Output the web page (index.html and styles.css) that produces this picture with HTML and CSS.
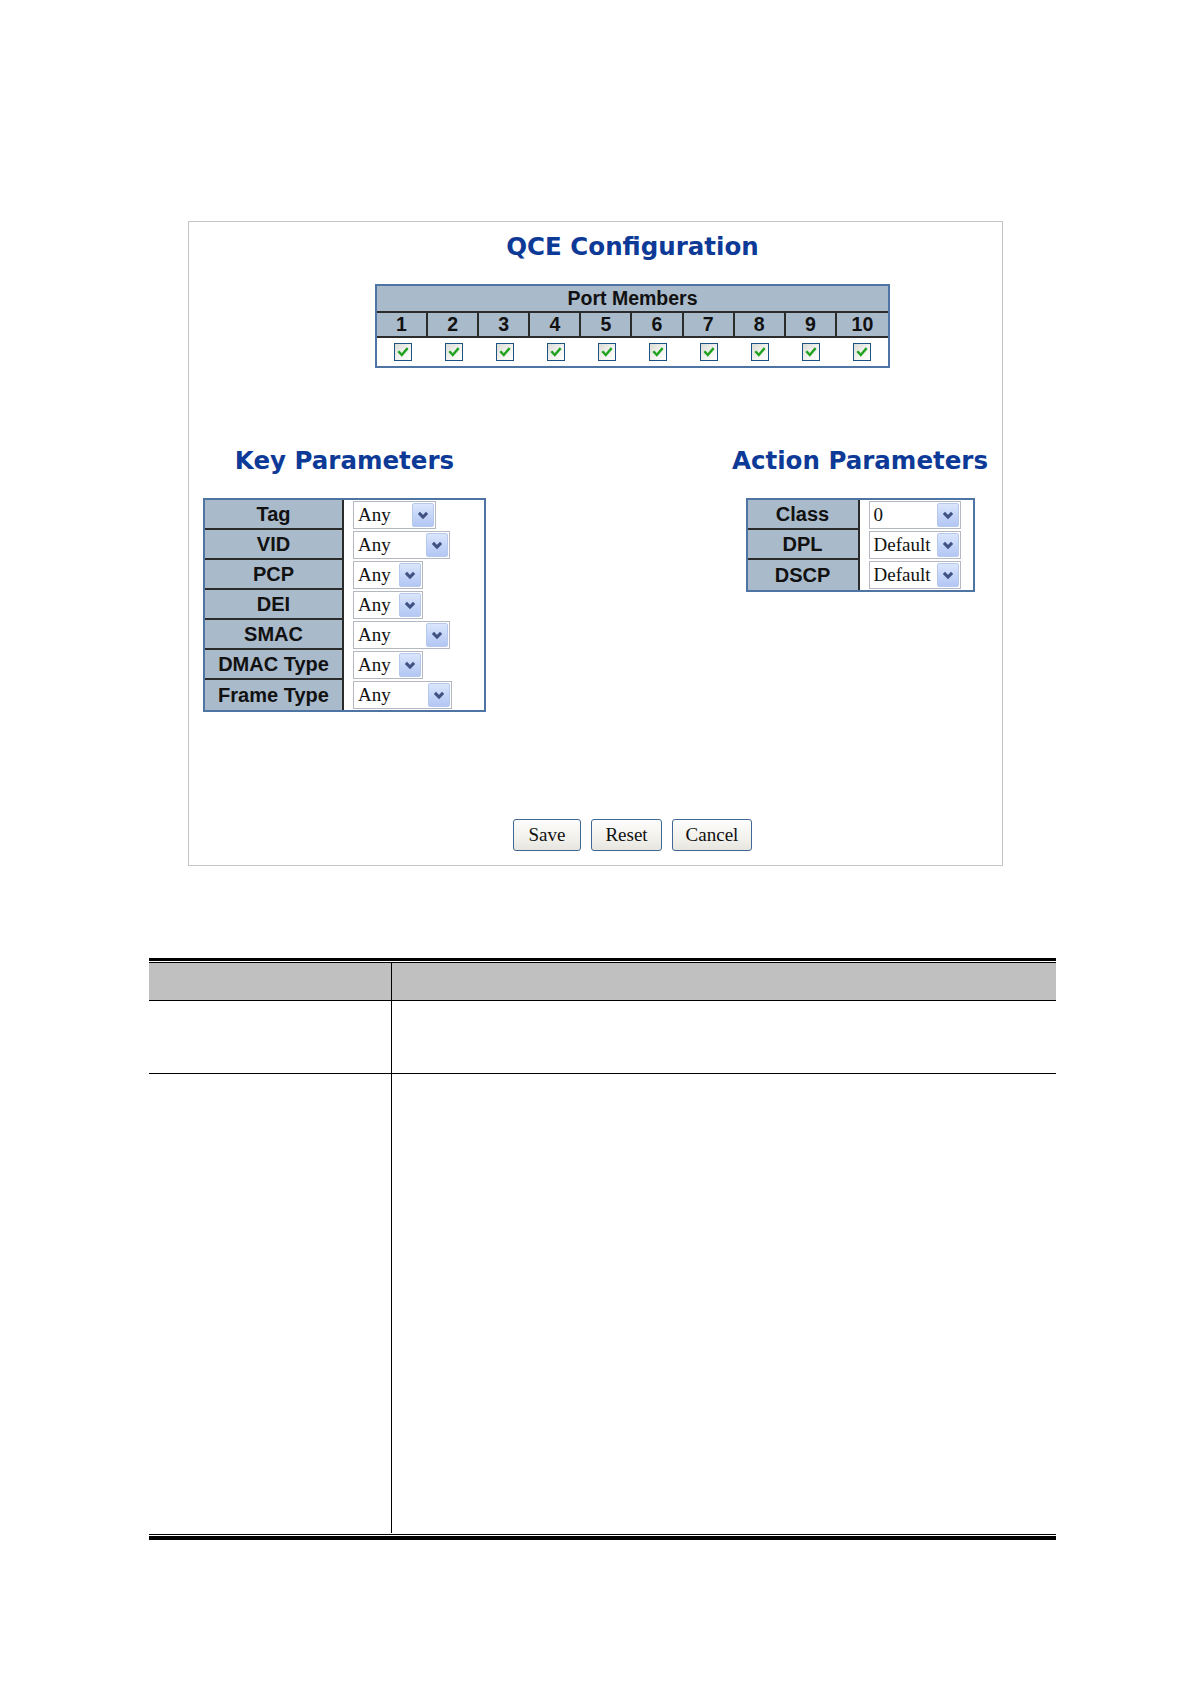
FILE: index.html
```html
<!DOCTYPE html>
<html>
<head>
<meta charset="utf-8">
<title>QCE Configuration</title>
<link rel="stylesheet" href="styles.css">
</head>
<body>
<div class="page">
  <div class="panel">
    <div class="center-block">
      <h1 class="title">QCE Configuration</h1>
      <div class="ports">
        <div class="ports-head">Port Members</div>
        <div class="ports-nums">
          <div>1</div><div>2</div><div>3</div><div>4</div><div>5</div><div>6</div><div>7</div><div>8</div><div>9</div><div>10</div>
        </div>
        <div class="ports-checks">
          <div><span class="cb"><svg viewBox="0 0 16 16"><path d="M3.6 8.2 L6.6 11.4 L12.4 4.6"/></svg></span></div>
          <div><span class="cb"><svg viewBox="0 0 16 16"><path d="M3.6 8.2 L6.6 11.4 L12.4 4.6"/></svg></span></div>
          <div><span class="cb"><svg viewBox="0 0 16 16"><path d="M3.6 8.2 L6.6 11.4 L12.4 4.6"/></svg></span></div>
          <div><span class="cb"><svg viewBox="0 0 16 16"><path d="M3.6 8.2 L6.6 11.4 L12.4 4.6"/></svg></span></div>
          <div><span class="cb"><svg viewBox="0 0 16 16"><path d="M3.6 8.2 L6.6 11.4 L12.4 4.6"/></svg></span></div>
          <div><span class="cb"><svg viewBox="0 0 16 16"><path d="M3.6 8.2 L6.6 11.4 L12.4 4.6"/></svg></span></div>
          <div><span class="cb"><svg viewBox="0 0 16 16"><path d="M3.6 8.2 L6.6 11.4 L12.4 4.6"/></svg></span></div>
          <div><span class="cb"><svg viewBox="0 0 16 16"><path d="M3.6 8.2 L6.6 11.4 L12.4 4.6"/></svg></span></div>
          <div><span class="cb"><svg viewBox="0 0 16 16"><path d="M3.6 8.2 L6.6 11.4 L12.4 4.6"/></svg></span></div>
          <div><span class="cb"><svg viewBox="0 0 16 16"><path d="M3.6 8.2 L6.6 11.4 L12.4 4.6"/></svg></span></div>
        </div>
      </div>
    </div>

    <div class="params">
      <div class="param-col">
        <h2 class="title">Key Parameters</h2>
        <div class="ptable key">
          <div class="lbl">Tag</div>
          <div class="val"><div class="sel w83"><span>Any</span><i class="dd"><svg viewBox="0 0 12 12"><polyline points="2.5,4.2 6,7.7 9.5,4.2"/></svg></i></div></div>
          <div class="lbl">VID</div>
          <div class="val"><div class="sel w97"><span>Any</span><i class="dd"><svg viewBox="0 0 12 12"><polyline points="2.5,4.2 6,7.7 9.5,4.2"/></svg></i></div></div>
          <div class="lbl">PCP</div>
          <div class="val"><div class="sel w70"><span>Any</span><i class="dd"><svg viewBox="0 0 12 12"><polyline points="2.5,4.2 6,7.7 9.5,4.2"/></svg></i></div></div>
          <div class="lbl">DEI</div>
          <div class="val"><div class="sel w70"><span>Any</span><i class="dd"><svg viewBox="0 0 12 12"><polyline points="2.5,4.2 6,7.7 9.5,4.2"/></svg></i></div></div>
          <div class="lbl">SMAC</div>
          <div class="val"><div class="sel w97"><span>Any</span><i class="dd"><svg viewBox="0 0 12 12"><polyline points="2.5,4.2 6,7.7 9.5,4.2"/></svg></i></div></div>
          <div class="lbl">DMAC Type</div>
          <div class="val"><div class="sel w70"><span>Any</span><i class="dd"><svg viewBox="0 0 12 12"><polyline points="2.5,4.2 6,7.7 9.5,4.2"/></svg></i></div></div>
          <div class="lbl last">Frame Type</div>
          <div class="val"><div class="sel w99"><span>Any</span><i class="dd"><svg viewBox="0 0 12 12"><polyline points="2.5,4.2 6,7.7 9.5,4.2"/></svg></i></div></div>
        </div>
      </div>
      <div class="param-col">
        <h2 class="title">Action Parameters</h2>
        <div class="ptable action">
          <div class="lbl">Class</div>
          <div class="val"><div class="sel w92"><span>0</span><i class="dd"><svg viewBox="0 0 12 12"><polyline points="2.5,4.2 6,7.7 9.5,4.2"/></svg></i></div></div>
          <div class="lbl">DPL</div>
          <div class="val"><div class="sel w92"><span>Default</span><i class="dd"><svg viewBox="0 0 12 12"><polyline points="2.5,4.2 6,7.7 9.5,4.2"/></svg></i></div></div>
          <div class="lbl last">DSCP</div>
          <div class="val"><div class="sel w92"><span>Default</span><i class="dd"><svg viewBox="0 0 12 12"><polyline points="2.5,4.2 6,7.7 9.5,4.2"/></svg></i></div></div>
        </div>
      </div>
    </div>

    <div class="btns">
      <button class="btn b-save">Save</button>
      <button class="btn b-reset">Reset</button>
      <button class="btn b-cancel">Cancel</button>
    </div>
  </div>

  <div class="doc">
    <div class="rule-thick"></div>
    <div class="rule-thin"></div>
    <div class="doc-row doc-head"><div class="c1"></div><div class="c2"></div></div>
    <div class="doc-row doc-r1"><div class="c1"></div><div class="c2"></div></div>
    <div class="doc-row doc-r2"><div class="c1"></div><div class="c2"></div></div>
    <div class="rule-thin"></div>
    <div class="rule-gap"></div>
    <div class="rule-thick bottom"></div>
  </div>
</div>
</body>
</html>
```

FILE: styles.css
```css
html, body {
  margin: 0;
  padding: 0;
  background: #ffffff;
}

.page {
  padding-top: 221px;
  padding-bottom: 100px;
}

.panel {
  margin-left: 188px;
  width: 815px;
  box-sizing: border-box;
  border: 1px solid #c4c4c4;
  padding: 10px 14px 14px 14px;
  background: #ffffff;
}

.center-block {
  padding-left: 74px;
  display: flex;
  flex-direction: column;
  align-items: center;
}

.title {
  margin: 0;
  font-family: "DejaVu Sans", "Liberation Sans", sans-serif;
  font-weight: bold;
  font-size: 24.5px;
  line-height: 30px;
  color: #0d3a97;
  white-space: nowrap;
}

/* Port members */
.ports {
  margin-top: 22px;
  width: 515px;
  box-sizing: border-box;
  border: 2px solid #4e74a3;
  font-family: "Liberation Sans", Arial, sans-serif;
  font-weight: bold;
  color: #111111;
}

.ports-head {
  height: 25px;
  line-height: 25px;
  text-align: center;
  font-size: 19.5px;
  background: #a9bacb;
  border-bottom: 2px solid #2b2b2b;
}

.ports-nums,
.ports-checks {
  display: grid;
  grid-template-columns: repeat(10, 1fr);
}

.ports-nums {
  height: 23px;
  border-bottom: 2px solid #2b2b2b;
  background: #a9bacb;
}

.ports-nums div {
  text-align: center;
  font-size: 19.5px;
  line-height: 23px;
  border-right: 2px solid #2b2b2b;
}

.ports-nums div:last-child {
  border-right: none;
}

.ports-checks {
  height: 28px;
  background: #ffffff;
}

.ports-checks div {
  display: flex;
  align-items: center;
  justify-content: center;
}

.cb {
  width: 18px;
  height: 18px;
  box-sizing: border-box;
  border: 1px solid #1d5281;
  background: linear-gradient(135deg, #dcdcd6 0%, #f4f4f1 60%, #ffffff 100%);
  display: flex;
  align-items: center;
  justify-content: center;
}

.cb svg {
  width: 14px;
  height: 14px;
}

.cb path {
  fill: none;
  stroke: #21a321;
  stroke-width: 2.8;
  stroke-linecap: square;
}

/* Parameters */
.params {
  margin-top: 78px;
  display: flex;
  justify-content: space-between;
  align-items: flex-start;
}

.param-col {
  display: flex;
  flex-direction: column;
  align-items: center;
}

.ptable {
  margin-top: 22px;
  display: grid;
  grid-auto-rows: 30px;
  border: 2px solid #4e74a3;
  background: #ffffff;
}

.ptable.key {
  grid-template-columns: 139px 140px;
}

.ptable.action {
  grid-template-columns: 112px 113px;
}

.lbl {
  box-sizing: border-box;
  background: #a9bacb;
  border-right: 2px solid #2b2b2b;
  border-bottom: 2px solid #2b2b2b;
  font-family: "Liberation Sans", Arial, sans-serif;
  font-weight: bold;
  font-size: 20px;
  color: #111111;
  display: flex;
  align-items: center;
  justify-content: center;
  white-space: nowrap;
}

.lbl.last {
  border-bottom: none;
}

.val {
  display: flex;
  align-items: center;
  padding-left: 9px;
}

.sel {
  height: 28px;
  box-sizing: border-box;
  border: 1px solid #b4b8c0;
  background: #ffffff;
  display: flex;
  align-items: center;
  justify-content: space-between;
  padding: 1px 1px 1px 4px;
}

.sel span {
  font-family: "Liberation Serif", "Times New Roman", serif;
  font-size: 19px;
  color: #111111;
  line-height: 22px;
}

.w70 { width: 70px; }
.w83 { width: 83px; }
.w92 { width: 92px; }
.w97 { width: 97px; }
.w99 { width: 99px; }

.dd {
  width: 22px;
  height: 24px;
  box-sizing: border-box;
  border: 1px solid #b7c8ee;
  border-radius: 2px;
  background: linear-gradient(180deg, #dbe6fd 0%, #c3d4f8 55%, #b3c7f3 100%);
  display: flex;
  align-items: center;
  justify-content: center;
}

.dd svg {
  width: 14px;
  height: 14px;
}

.dd polyline {
  fill: none;
  stroke: #3f5282;
  stroke-width: 2.6;
}

/* Buttons */
.btns {
  margin-top: 107px;
  padding-left: 74px;
  display: flex;
  justify-content: center;
  gap: 10px;
}

.btn {
  height: 32px;
  box-sizing: border-box;
  border: 1px solid #3f6894;
  border-radius: 3px;
  background: linear-gradient(180deg, #fdfdfc 0%, #f2f1ec 60%, #e6e5df 100%);
  font-family: "Liberation Serif", "Times New Roman", serif;
  font-size: 19px;
  color: #111111;
  padding: 0;
  margin: 0;
}

.b-save { width: 68px; }
.b-reset { width: 71px; }
.b-cancel { width: 80px; }

/* Document table */
.doc {
  margin-top: 92px;
  margin-left: 149px;
  width: 907px;
}

.rule-thick {
  height: 3px;
  background: #000000;
}

.rule-thick.bottom {
  height: 4px;
}

.rule-thin {
  height: 1px;
  background: #000000;
  margin-top: 1px;
}

.rule-gap {
  height: 1px;
}

.doc-row {
  display: grid;
  grid-template-columns: 243px 1fr;
  border-bottom: 1px solid #000000;
}

.doc-row .c1 {
  border-right: 1px solid #000000;
}

.doc-head {
  height: 37px;
  background: #c0c0c0;
}

.doc-r1 {
  height: 72px;
}

.doc-r2 {
  height: 459px;
  border-bottom: none;
}
```
